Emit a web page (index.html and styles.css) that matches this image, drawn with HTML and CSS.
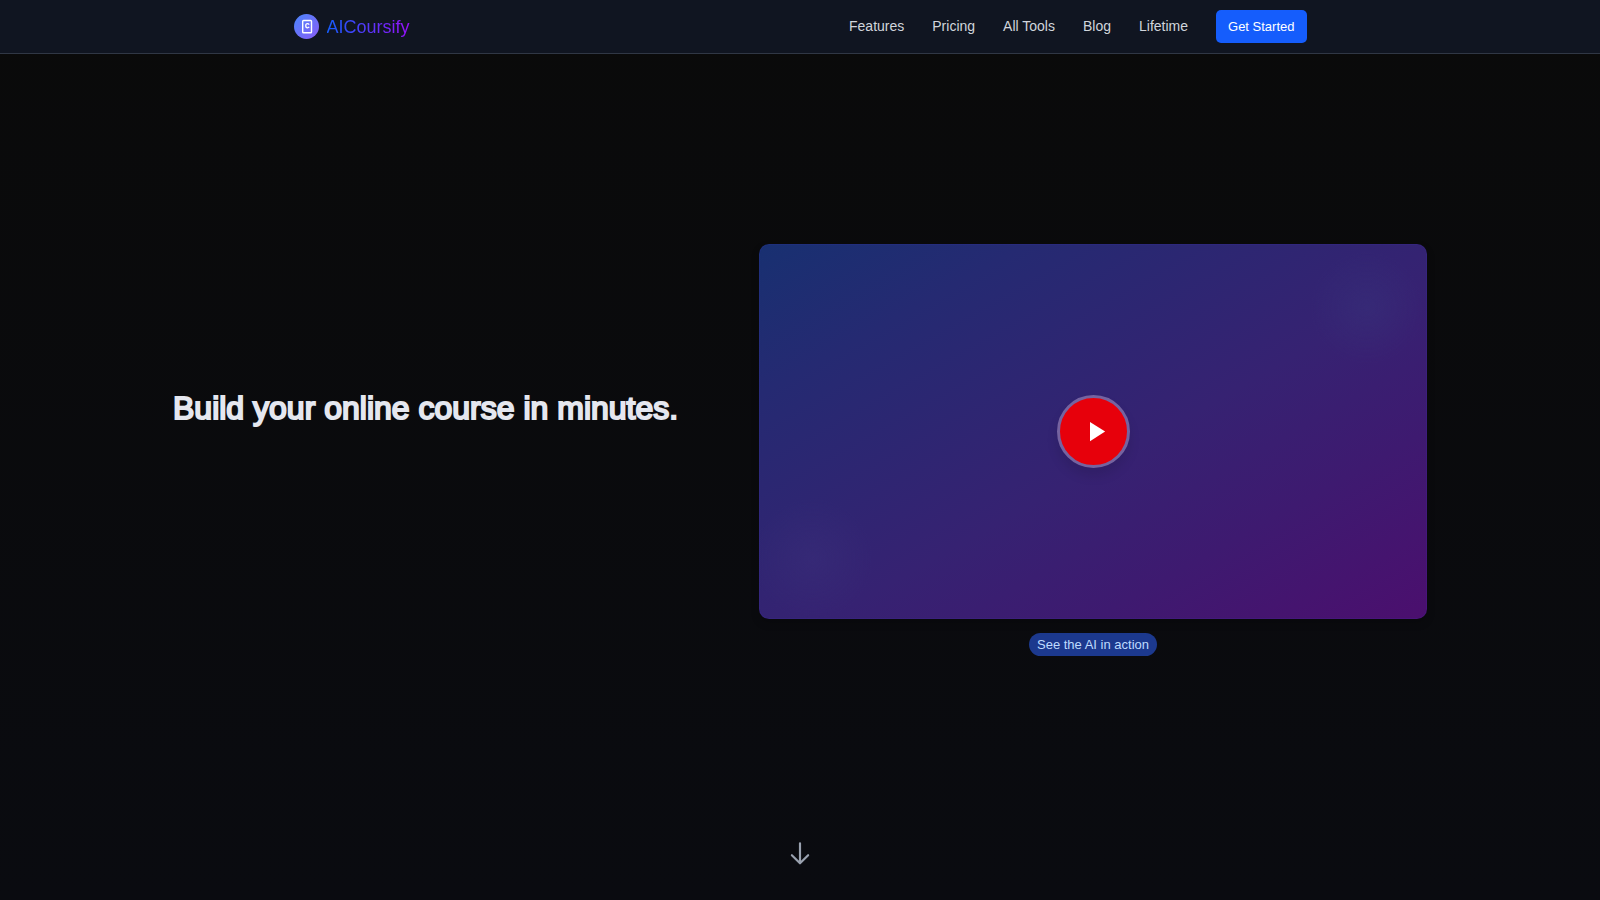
FILE: index.html
```html
<!DOCTYPE html>
<html lang="en">
<head>
<meta charset="utf-8">
<meta name="viewport" content="width=device-width, initial-scale=1">
<title>AICoursify</title>
<link rel="stylesheet" href="styles.css">
</head>
<body>
<header class="site-header">
  <div class="header-inner">
    <a class="brand" href="#">
      <svg class="brand-logo" viewBox="0 0 25 25" aria-hidden="true">
        <defs>
          <linearGradient id="logo-fill" x1="0" y1="0" x2="1" y2="1">
            <stop offset="0" stop-color="#4a86fb"/>
            <stop offset="1" stop-color="#8a5cf7"/>
          </linearGradient>
        </defs>
        <circle cx="12.5" cy="12.5" r="12.5" fill="url(#logo-fill)"/>
        <rect x="8.7" y="6.5" width="8.8" height="12.2" rx="0.8" fill="none" stroke="#fff" stroke-width="1.4"/>
        <path d="M15.200 10.600C14.500 9.700 13.900 9.700 13.400 9.700C11.200 9.700 11.200 13.800 13.400 13.800C13.900 13.800 14.500 13.800 15.200 12.900" fill="none" stroke="#fff" stroke-width="1.3"/>
      </svg>
      <span class="brand-name">AICoursify</span>
    </a>
    <nav class="nav" aria-label="Main">
      <a href="#">Features</a>
      <a href="#">Pricing</a>
      <a href="#">All Tools</a>
      <a href="#">Blog</a>
      <a href="#">Lifetime</a>
      <button class="cta" type="button">Get Started</button>
    </nav>
  </div>
</header>
<main class="hero">
  <div class="hero-grid">
    <h1 class="headline">Build your online course in minutes.</h1>
    <div class="demo">
      <div class="video">
        <button class="play" type="button" aria-label="Play video">
          <svg viewBox="0 0 24 24" aria-hidden="true"><path d="M8 5v14l11-7z" fill="#fff"/></svg>
        </button>
      </div>
      <span class="pill">See the AI in action</span>
    </div>
  </div>
  <a class="scroll-down" href="#" aria-label="Scroll down">
    <svg viewBox="0 0 24 24" fill="none" stroke="currentColor" stroke-width="2" stroke-linecap="round" stroke-linejoin="round" aria-hidden="true"><path d="M12 3v18.500M4.500 14l7.500 7.500 7.500-7.500"/></svg>
  </a>
</main>
</body>
</html>
```
FILE: styles.css
```css
* {
  box-sizing: border-box;
}

body {
  margin: 0;
  min-height: 100vh;
  display: flex;
  flex-direction: column;
  background: linear-gradient(#0a0a0a, #0a0b10);
  color: #e5e7eb;
  font-family: "Liberation Sans", Arial, sans-serif;
}

.site-header {
  background: #101521;
  border-bottom: 1px solid #303745;
}

.header-inner {
  max-width: 1045px;
  margin: 0 auto;
  padding: 10px 16px;
  display: flex;
  align-items: center;
  justify-content: space-between;
}

.brand {
  display: flex;
  align-items: center;
  gap: 8px;
  text-decoration: none;
}

.brand-logo {
  width: 25px;
  height: 25px;
}

.brand-name {
  font-size: 18px;
  line-height: 24px;
  background: linear-gradient(90deg, #155dfc, #9810fa);
  background-clip: text;
  -webkit-background-clip: text;
  color: transparent;
}

.nav {
  display: flex;
  align-items: center;
  gap: 28px;
}

.nav a {
  padding-bottom: 2px;
  color: #d1d5dc;
  font-size: 14px;
  line-height: 20px;
  text-decoration: none;
}

.cta {
  border: 0;
  border-radius: 5px;
  padding: 0 12px;
  background: #155dfc;
  color: #fff;
  font: 13px/33px "Liberation Sans", Arial, sans-serif;
}

.hero {
  flex: 1;
  display: flex;
  flex-direction: column;
  position: relative;
}

.hero-grid {
  flex: 1;
  width: 100%;
  max-width: 1286px;
  margin: 0 auto;
  padding: 0 16px 54px;
  display: grid;
  grid-template-columns: 522fr 668fr;
  gap: 64px;
  align-items: center;
}

.headline {
  margin: 0;
  padding-bottom: 84px;
  font-size: 32px;
  font-weight: 400;
  line-height: 40px;
  color: #e5e7ef;
  -webkit-text-stroke: 2px #e5e7ef;
}

.demo {
  display: flex;
  flex-direction: column;
  align-items: center;
  gap: 14px;
}

.video {
  width: 100%;
  aspect-ratio: 16 / 9;
  border-radius: 10px;
  display: flex;
  align-items: center;
  justify-content: center;
  background:
    radial-gradient(circle at 91% 17%, #38388050, #38388000 56px),
    radial-gradient(circle at 8% 84%, #3c307c66, #3c307c00 60px),
    linear-gradient(to bottom right, #183071, #252a72 20%, #362272 55%, #3e1a70 75%, #4b0f6e);
  box-shadow: inset 0 0 0 1px #4338ca22, 0 4px 8px #0003;
}

.play {
  width: 73px;
  height: 73px;
  padding: 0;
  border: 3px solid #7563a0;
  border-radius: 50%;
  background: #e7000b;
  display: flex;
  align-items: center;
  justify-content: center;
  box-shadow: 0 8px 12px #0000001a;
}

.play svg {
  width: 33px;
  height: 33px;
  margin-left: 4px;
}

.pill {
  padding: 0 8px;
  border-radius: 12px;
  background: #1c398e;
  color: #bedbff;
  font-size: 13px;
  line-height: 23px;
}

.scroll-down {
  position: absolute;
  left: 0;
  right: 0;
  bottom: 34px;
  display: flex;
  justify-content: center;
  color: #99a1af;
}

.scroll-down svg {
  width: 26px;
  height: 26px;
}
```
